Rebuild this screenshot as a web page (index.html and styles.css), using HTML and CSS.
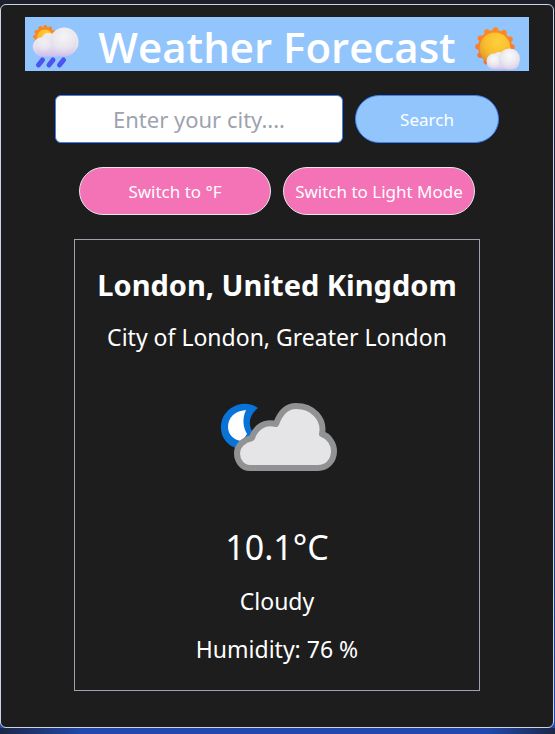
FILE: index.html
```html
<!DOCTYPE html>
<html lang="en">
<head>
<meta charset="utf-8">
<meta name="viewport" content="width=device-width, initial-scale=1">
<title>Weather Forecast</title>
<link rel="stylesheet" href="styles.css">
</head>
<body>
<main class="app">
  <header class="banner">
    <svg class="banner-icon" viewBox="0 0 54 54" aria-hidden="true">
      <defs>
        <radialGradient id="puff" cx="0.5" cy="0.35" r="0.7"><stop offset="0" stop-color="#fafafa"/><stop offset="0.6" stop-color="#e9e7ed"/><stop offset="1" stop-color="#d3cae6"/></radialGradient>
        <linearGradient id="cloud" x1="0" y1="0" x2="0" y2="1"><stop offset="0" stop-color="#f0eff2"/><stop offset="0.65" stop-color="#e6e2ed"/><stop offset="1" stop-color="#cfbdf0"/></linearGradient>
        <radialGradient id="sun" cx="0.6" cy="0.3" r="0.75"><stop offset="0" stop-color="#ffd13b"/><stop offset="0.6" stop-color="#f8bb2d"/><stop offset="1" stop-color="#d99a2b"/></radialGradient>
        <linearGradient id="rays" x1="0" y1="0" x2="0" y2="1"><stop offset="0" stop-color="#ff8a1d"/><stop offset="1" stop-color="#ee7040"/></linearGradient>
      </defs>
      <circle cx="20" cy="20" r="10" fill="#fb8520" stroke="#fb8520" stroke-width="4" stroke-linecap="round" stroke-dasharray="0.1 5.13"/>
      <circle cx="20" cy="21" r="8.5" fill="url(#sun)"/>
      <path d="M18 39.500A9.500 9.500 0 0 1 17 20A7 7 0 0 1 27 17A14.500 14.500 0 1 1 40 39.500Z" fill="url(#cloud)"/>
      <circle cx="38.500" cy="24.500" r="13" fill="url(#puff)" opacity=".6"/>
      <circle cx="19" cy="28" r="8" fill="url(#puff)" opacity=".5"/>
      <path d="M17.500 43l-4 5M28 43l-4 5M38.500 43l-4 5" stroke="#4d53ee" stroke-width="5" stroke-linecap="round"/>
    </svg>
    <h1 class="banner-title">Weather Forecast</h1>
    <svg class="banner-icon" viewBox="0 0 54 54" aria-hidden="true">
      <circle cx="20" cy="30" r="17" fill="url(#rays)" stroke="url(#rays)" stroke-width="5.500" stroke-linecap="round" stroke-dasharray="0.1 8.800"/>
      <circle cx="20" cy="31" r="15.500" fill="url(#sun)"/>
      <rect x="12" y="39" width="32" height="13.500" rx="6.500" fill="url(#cloud)"/>
      <circle cx="24" cy="41" r="6" fill="#eeecf1"/>
      <circle cx="19" cy="44" r="7.500" fill="url(#puff)"/>
      <circle cx="34.500" cy="42" r="10.500" fill="url(#puff)"/>
    </svg>
  </header>

  <form class="row" onsubmit="return false">
    <input class="city-input" type="text" aria-label="City" placeholder="Enter your city....">
    <button class="pill pill-search" type="submit">Search</button>
  </form>

  <div class="row">
    <button class="pill pill-toggle" type="button">Switch to °F</button>
    <button class="pill pill-toggle" type="button">Switch to Light Mode</button>
  </div>

  <section class="weather">
    <h2 class="place">London, United Kingdom</h2>
    <p class="detail">City of London, Greater London</p>
    <svg class="condition" viewBox="0 0 144 144" role="img" aria-label="Cloudy night">
      <path d="M53 41C41 32 22 38 17 53C13 66 20 79 34 82L49 67C42 58 44 48 53 41Z" fill="#0a73d8"/>
      <path d="M41 43C29 44 23 51 23 60C23 67 28 73 37 74L42 67C38 60 37 52 41 43Z" fill="#fff"/>
      <path d="M45 101C37 101 32 94 32 86C32 79 38 73 47 71C50 61 59 54 71 57C75 46 82 39 91 39C108 39 120 52 117 67C124 69 129 77 129 84C129 94 122 101 113 101Z" fill="#e5e5e8" stroke="#919293" stroke-width="6" stroke-linejoin="round"/>
    </svg>
    <p class="temperature">10.1°C</p>
    <p class="detail">Cloudy</p>
    <p class="detail">Humidity: 76 %</p>
  </section>
</main>
</body>
</html>
```
FILE: styles.css
```css
* {
  box-sizing: border-box;
}

body {
  margin: 0;
  min-height: 100vh;
  padding: 4px 1px 6px 0;
  background:
    linear-gradient(90deg, #1b2745, transparent 15%, transparent 88%, #1b2745) bottom / 100% 6px no-repeat,
    linear-gradient(#1c202b, #1e3a80 80%, #2149ad);
  color: #fff;
  font-family: "Segoe UI", "Noto Sans", "Open Sans", sans-serif;
}

h1,
h2,
p {
  margin: 0;
}

.app {
  display: flex;
  flex-direction: column;
  align-items: center;
  gap: 24px;
  min-height: calc(100vh - 10px);
  padding: 12px 24px 36px;
  border: 1px solid #cbd5e1;
  border-radius: 6px;
  background: #1d1d1d;
}

.banner {
  display: flex;
  align-items: center;
  justify-content: space-between;
  width: 100%;
  height: 54px;
  background: #93c5fd;
}

.banner-icon {
  flex: none;
  width: 54px;
  height: 54px;
}

.banner-title {
  padding-top: 6px;
  font-family: "Segoe UI", "Open Sans", "Noto Sans", sans-serif;
  font-size: 42px;
  font-weight: 600;
  line-height: 48px;
  white-space: nowrap;
}

.row {
  display: flex;
  justify-content: center;
  gap: 12px;
}

.city-input {
  width: 288px;
  height: 48px;
  padding: 0 12px;
  border: 1px solid #3b82f6;
  border-radius: 6px;
  background: #fff;
  color: #111827;
  font: inherit;
  font-size: 22px;
  text-align: center;
}

.city-input::placeholder {
  color: #9ca3af;
  opacity: 1;
}

.pill {
  height: 48px;
  padding: 0;
  border: 1px solid #e5e7eb;
  border-radius: 24px;
  color: #fff;
  font: inherit;
  font-size: 17px;
  white-space: nowrap;
}

.pill-search {
  width: 144px;
  border-color: #3b82f6;
  background: #93c5fd;
}

.pill-toggle {
  width: 192px;
  background: #f472b6;
}

.weather {
  display: flex;
  flex-direction: column;
  align-items: center;
  gap: 12px;
  width: 100%;
  max-width: 406px;
  padding: 23px 20px;
  border: 1px solid #9ca3af;
  text-align: center;
}

.place {
  font-size: 29px;
  font-weight: 700;
  line-height: 44px;
  white-space: nowrap;
}

.detail {
  font-size: 23px;
  line-height: 36px;
}

.condition {
  width: 144px;
  height: 144px;
}

.temperature {
  font-size: 34px;
  line-height: 48px;
}
```
